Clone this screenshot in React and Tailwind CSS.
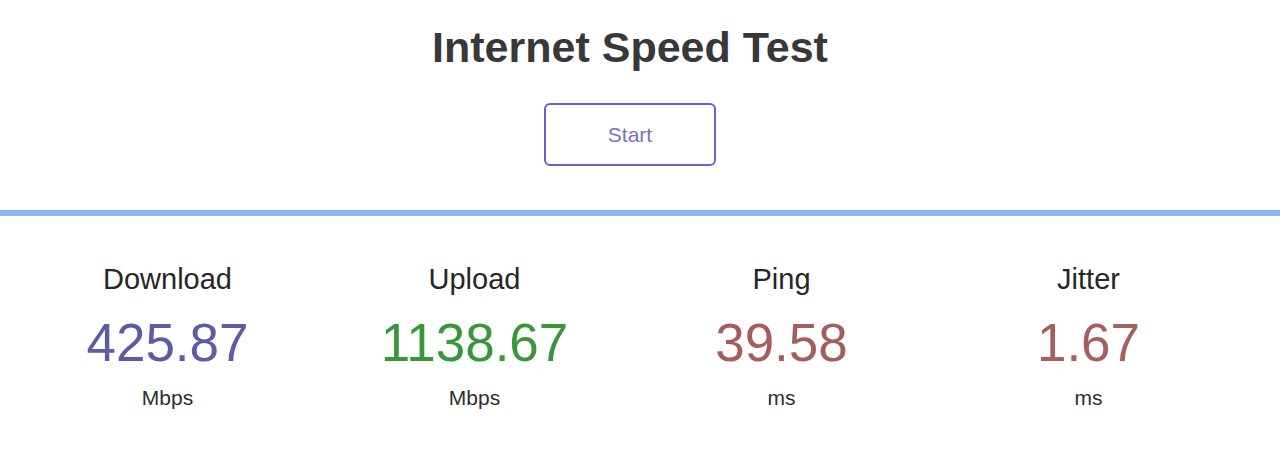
const STATS = [
  { label: 'Download', value: '425.87', unit: 'Mbps', color: 'text-[#5d5ba6]' },
  { label: 'Upload', value: '1138.67', unit: 'Mbps', color: 'text-[#3a963a]' },
  { label: 'Ping', value: '39.58', unit: 'ms', color: 'text-[#a65c5c]' },
  { label: 'Jitter', value: '1.67', unit: 'ms', color: 'text-[#a65e5e]' },
];

export default function App() {
  return (
    <div className="min-h-[455px] bg-white font-['Liberation_Sans',Arial,sans-serif]">
      <div className="pr-[20px] flex flex-col items-center">
        <h1 className="mt-[26px] text-[43px] leading-none font-bold text-[#383838]">
          Internet Speed Test
        </h1>
        <button className="mt-[34px] w-[172px] h-[63px] rounded-[6px] border-2 border-[#6a5fd4] bg-white text-[21px] text-[#7a72b6]">
          Start
        </button>
      </div>

      <div className="mt-[44px] h-[6px] bg-[#8db4f5]" />

      <div className="pr-[24px]">
        <div className="mx-auto w-[1228px] grid grid-cols-4">
          {STATS.map(s => (
            <div key={s.label} className="flex flex-col items-center">
              <div className="mt-[49px] text-[29px] leading-none text-[#262626]">{s.label}</div>
              <div className={`mt-[22px] text-[53px] leading-none ${s.color}`}>{s.value}</div>
              <div className="mt-[18px] text-[21px] leading-none text-[#2e2e2e]">{s.unit}</div>
            </div>
          ))}
        </div>
      </div>
    </div>
  );
}
